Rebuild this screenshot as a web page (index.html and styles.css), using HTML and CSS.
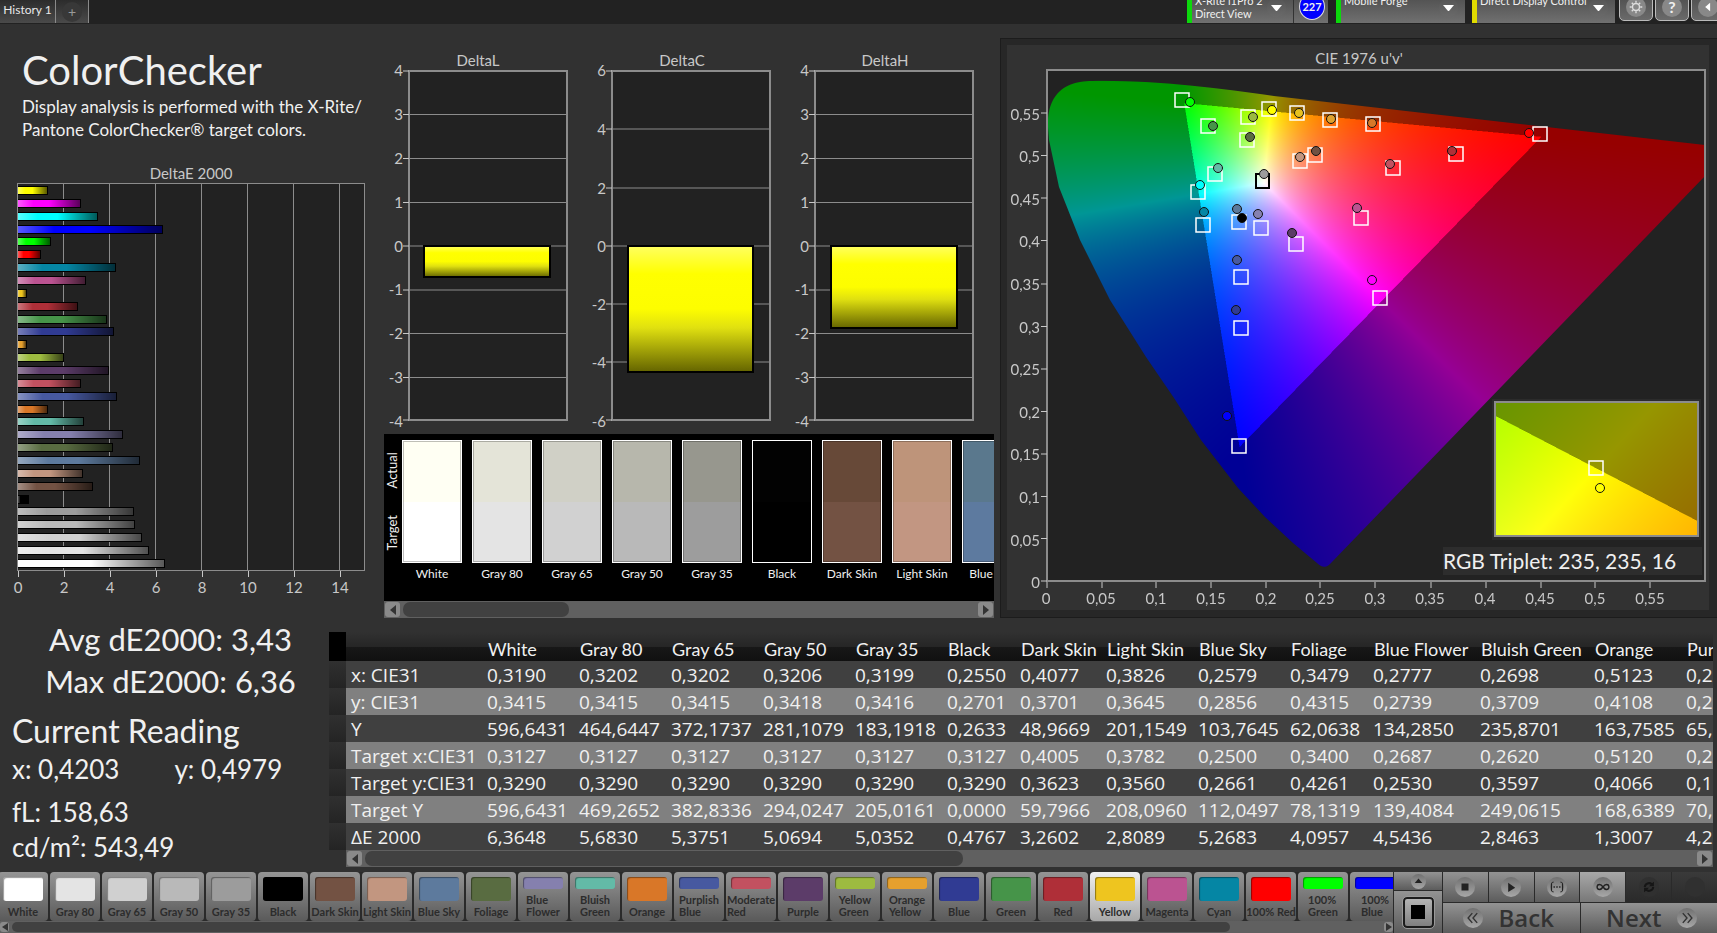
FILE: index.html
```html
<!DOCTYPE html>
<html lang="en">
<head>
  <meta charset="UTF-8">
  <meta name="viewport" content="width=device-width, initial-scale=1.0">
  <title>ColorChecker</title>
  <link rel="stylesheet" href="styles.css">
</head>
<body>

  <header class="topbar">
    <button class="tab">History 1</button>
    <button class="tab tab-add" aria-label="Add tab"><span>+</span></button>
    <div class="devices">
      <button class="device device-meter"><span>X-Rite i1Pro 2<br>Direct View</span><i class="caret"></i></button>
      <div class="device-count"><span>227</span></div>
      <button class="device device-source"><span>Mobile Forge<br>&nbsp;</span><i class="caret"></i></button>
      <button class="device device-display"><span>Direct Display Control<br>&nbsp;</span><i class="caret"></i></button>
      <button class="tool" aria-label="Settings">
        <svg class="tool-icon" viewBox="0 0 20 20"><circle cx="10" cy="10" r="5" fill="none" stroke="#ddd" stroke-width="2"/><path d="M10 1v3M10 16v3M1 10h3M16 10h3M4 4l2 2M14 14l2 2M16 4l-2 2M4 16l2-2" stroke="#ddd" stroke-width="2"/></svg>
      </button>
      <button class="tool" aria-label="Help"><span class="tool-icon">?</span></button>
      <button class="tool" aria-label="Collapse">
        <svg class="tool-icon" viewBox="0 0 20 20"><path d="M13 4v12L6 10z" fill="#fff"/></svg>
      </button>
    </div>
  </header>

  <main>
    <div class="row-top">
      <section class="intro">
        <h1>ColorChecker</h1>
        <p>Display analysis is performed with the X-Rite/<br>Pantone ColorChecker® target colors.</p>
        <h2 class="chart-title">DeltaE 2000</h2>
        <div class="de-plot">
          <i class="de-bar" style="--v:1.29;--c:#ffff00"></i>
          <i class="de-bar" style="--v:2.72;--c:#ff00ff"></i>
          <i class="de-bar" style="--v:3.46;--c:#00ffff"></i>
          <i class="de-bar" style="--v:6.29;--c:#0000ff"></i>
          <i class="de-bar" style="--v:1.42;--c:#00ff00"></i>
          <i class="de-bar" style="--v:1.00;--c:#ff0000"></i>
          <i class="de-bar" style="--v:4.25;--c:#0586a4"></i>
          <i class="de-bar" style="--v:2.94;--c:#bb5391"></i>
          <i class="de-bar" style="--v:0.37;--c:#eec51f"></i>
          <i class="de-bar" style="--v:2.60;--c:#af2f38"></i>
          <i class="de-bar" style="--v:3.86;--c:#469449"></i>
          <i class="de-bar" style="--v:4.16;--c:#303b93"></i>
          <i class="de-bar" style="--v:0.38;--c:#e5a02e"></i>
          <i class="de-bar" style="--v:1.98;--c:#9dbb40"></i>
          <i class="de-bar" style="--v:3.95;--c:#5c3c69"></i>
          <i class="de-bar" style="--v:2.73;--c:#c25160"></i>
          <i class="de-bar" style="--v:4.30;--c:#4759a0"></i>
          <i class="de-bar" style="--v:1.30;--c:#d97728"></i>
          <i class="de-bar" style="--v:2.85;--c:#63baa7"></i>
          <i class="de-bar" style="--v:4.54;--c:#8580ae"></i>
          <i class="de-bar" style="--v:4.10;--c:#596c41"></i>
          <i class="de-bar" style="--v:5.27;--c:#5d7a9d"></i>
          <i class="de-bar" style="--v:2.81;--c:#c29680"></i>
          <i class="de-bar" style="--v:3.26;--c:#735243"></i>
          <i class="de-bar" style="--v:0.48;--c:#000"></i>
          <i class="de-bar" style="--v:5.04;--c:#9c9c9c"></i>
          <i class="de-bar" style="--v:5.07;--c:#b9b9b9"></i>
          <i class="de-bar" style="--v:5.38;--c:#d0d0d0"></i>
          <i class="de-bar" style="--v:5.68;--c:#e4e4e4"></i>
          <i class="de-bar" style="--v:6.36;--c:#fff"></i>
        </div>
        <div class="de-axis">
          <span>0</span><span>2</span><span>4</span><span>6</span><span>8</span><span>10</span><span>12</span><span>14</span>
        </div>
      </section>

      <section class="center">
        <div class="deltas">
          <svg class="delta" viewBox="0 0 203 410">
            <defs>
              <linearGradient id="yellow" x1="0" y1="0" x2="0" y2="1">
                <stop offset="0" stop-color="#ffff60"/><stop offset=".22" stop-color="#ffff00"/><stop offset=".5" stop-color="#fdfd00"/><stop offset=".65" stop-color="#e0e010"/><stop offset="1" stop-color="#646400"/>
              </linearGradient>
            </defs>
            <text class="delta-name" x="94" y="42">DeltaL</text>
            <rect class="plot" x="25" y="47" width="158" height="349"/>
            <path class="grid" d="M25 90.500H183M25 134.500H183M25 178.500H183M25 222H183M25 266H183M25 309.500H183M25 353.500H183"/>
            <path class="tick" d="M19 47H25M19 90.500H25M19 134.500H25M19 178.500H25M19 222H25M19 266H25M19 309.500H25M19 353.500H25M19 396H25"/>
            <rect class="delta-bar" x="40" y="222" width="126" height="31"/>
            <g class="ylabel"><text x="19" y="52">4</text><text x="19" y="96">3</text><text x="19" y="140">2</text><text x="19" y="184">1</text><text x="19" y="228">0</text><text x="19" y="271">-1</text><text x="19" y="315">-2</text><text x="19" y="359">-3</text><text x="19" y="403">-4</text></g>
          </svg>
          <svg class="delta" viewBox="0 0 203 410">
            <text class="delta-name" x="95" y="42">DeltaC</text>
            <rect class="plot" x="25" y="47" width="158" height="349"/>
            <path class="grid" d="M25 105H183M25 164H183M25 222H183M25 280H183M25 338H183"/>
            <path class="tick" d="M19 47H25M19 105H25M19 164H25M19 222H25M19 280H25M19 338H25M19 396H25"/>
            <rect class="delta-bar" x="41" y="222" width="125" height="126"/>
            <g class="ylabel"><text x="19" y="52">6</text><text x="19" y="111">4</text><text x="19" y="170">2</text><text x="19" y="228">0</text><text x="19" y="286">-2</text><text x="19" y="344">-4</text><text x="19" y="403">-6</text></g>
          </svg>
          <svg class="delta" viewBox="0 0 203 410">
            <text class="delta-name" x="95" y="42">DeltaH</text>
            <rect class="plot" x="25" y="47" width="158" height="349"/>
            <path class="grid" d="M25 90.500H183M25 134.500H183M25 178.500H183M25 222H183M25 266H183M25 309.500H183M25 353.500H183"/>
            <path class="tick" d="M19 47H25M19 90.500H25M19 134.500H25M19 178.500H25M19 222H25M19 266H25M19 309.500H25M19 353.500H25M19 396H25"/>
            <rect class="delta-bar" x="41" y="222" width="126" height="82"/>
            <g class="ylabel"><text x="19" y="52">4</text><text x="19" y="96">3</text><text x="19" y="140">2</text><text x="19" y="184">1</text><text x="19" y="228">0</text><text x="19" y="271">-1</text><text x="19" y="315">-2</text><text x="19" y="359">-3</text><text x="19" y="403">-4</text></g>
          </svg>
        </div>

        <div class="patches">
          <div class="patch-side"><span>Actual</span><span>Target</span></div>
          <div class="patch-list">
            <div class="patch"><div class="patch-box" style="--a:#fffff3;--t:#fff"></div>White</div>
            <div class="patch"><div class="patch-box" style="--a:#e4e4d8;--t:#e4e4e4"></div>Gray 80</div>
            <div class="patch"><div class="patch-box" style="--a:#d0d0c6;--t:#d1d1d1"></div>Gray 65</div>
            <div class="patch"><div class="patch-box" style="--a:#b7b7ac;--t:#b9b9b9"></div>Gray 50</div>
            <div class="patch"><div class="patch-box" style="--a:#97978e;--t:#9d9d9d"></div>Gray 35</div>
            <div class="patch"><div class="patch-box" style="--a:#020202;--t:#000"></div>Black</div>
            <div class="patch"><div class="patch-box" style="--a:#674938;--t:#735243"></div>Dark Skin</div>
            <div class="patch"><div class="patch-box" style="--a:#be947a;--t:#c29682"></div>Light Skin</div>
            <div class="patch"><div class="patch-box" style="--a:#5a788d;--t:#5d7a9f"></div>Blue Sky</div>
          </div>
        </div>
        <div class="scroll">
          <button class="scroll-btn" aria-label="Scroll left"><i class="arrow-left"></i></button>
          <div class="scroll-track"><div class="scroll-thumb" style="width:29%"></div></div>
          <button class="scroll-btn" aria-label="Scroll right"><i class="arrow-right"></i></button>
        </div>
      </section>

      <section class="cie-frame">
        <svg class="cie" viewBox="0 0 702 565">
          <text class="cie-name" x="352" y="19">CIE 1976 u'v'</text>
          <rect x="40" y="25" width="658" height="511" fill="#222"/>
          <foreignObject x="40" y="25" width="658" height="511"><canvas id="uv" class="gamut" width="1316" height="1022"></canvas></foreignObject>
          <rect x="40" y="25" width="658" height="511" fill="none" stroke="#8c8c8c" stroke-width="2"/>
          <path class="tick" d="M34 68H40M34 110.500H40M34 153H40M34 195.500H40M34 239H40M34 281.500H40M34 324H40M34 366.500H40M34 409H40M34 451.500H40M34 493.500H40M34 536H40M40 537V543M95 537V543M149 537V543M204 537V543M259 537V543M313 537V543M368 537V543M424 537V543M479 537V543M534 537V543M588 537V543M643 537V543"/>
          <g class="ylabel cie-label"><text x="33" y="75">0,55</text><text x="33" y="117">0,5</text><text x="33" y="160">0,45</text><text x="33" y="202">0,4</text><text x="33" y="245">0,35</text><text x="33" y="288">0,3</text><text x="33" y="330">0,25</text><text x="33" y="373">0,2</text><text x="33" y="415">0,15</text><text x="33" y="458">0,1</text><text x="33" y="501">0,05</text><text x="33" y="543">0</text></g>
          <g class="xlabel cie-label"><text x="39" y="559">0</text><text x="94" y="559">0,05</text><text x="149" y="559">0,1</text><text x="204" y="559">0,15</text><text x="259" y="559">0,2</text><text x="313" y="559">0,25</text><text x="368" y="559">0,3</text><text x="423" y="559">0,35</text><text x="478" y="559">0,4</text><text x="533" y="559">0,45</text><text x="588" y="559">0,5</text><text x="643" y="559">0,55</text></g>
          <!-- target boxes -->
          <path class="target" d="M168 48h14v14h-14zM194 74h14v14h-14zM234 65h14v14h-14zM255 57h14v14h-14zM283 61h14v14h-14zM316 68h14v14h-14zM359 72h14v14h-14zM526 82h14v14h-14zM233 88h14v14h-14zM286 109h14v14h-14zM301 103h14v14h-14zM379 116h14v14h-14zM442 102h14v14h-14zM201 122h14v14h-14zM184 140h14v14h-14zM189 173h14v14h-14zM225 170h14v14h-14zM247 176h14v14h-14zM282 192h14v14h-14zM347 166h14v14h-14zM227 225h14v14h-14zM366 246h14v14h-14zM227 276h14v14h-14zM225 394h14v14h-14z"/>
          <path class="target target-white" d="M249 129h13v14h-13z"/>
          <!-- measured points -->
          <g class="reading">
            <circle cx="183" cy="57" r="4.500" fill="#00ff00"/><circle cx="206" cy="81" r="4.500" fill="#469449"/><circle cx="246" cy="72" r="4.500" fill="#9bb941"/><circle cx="265" cy="65" r="4.500" fill="#ffff00"/><circle cx="292" cy="68" r="4.500" fill="#e7c11f"/><circle cx="324" cy="74" r="4.500" fill="#e0a12e"/><circle cx="365" cy="78" r="4.500" fill="#d67828"/><circle cx="522" cy="88" r="4.500" fill="#ff0000"/>
            <circle cx="243" cy="92" r="4.500" fill="#596c41"/><circle cx="293" cy="112" r="4.500" fill="#c29680"/><circle cx="309" cy="106" r="4.500" fill="#725142"/><circle cx="383" cy="119" r="4.500" fill="#c05260"/><circle cx="445" cy="106" r="4.500" fill="#af2f38"/><circle cx="211" cy="123" r="4.500" fill="#63baa7"/><circle cx="257" cy="129" r="4.500" fill="#9c9c9c"/><circle cx="193" cy="140" r="4.500" fill="#00ffff"/>
            <circle cx="197" cy="167" r="4.500" fill="#0586a4"/><circle cx="230" cy="164" r="4.500" fill="#5c7a9c"/><circle cx="235" cy="173" r="4.500" fill="#000"/><circle cx="251" cy="169" r="4.500" fill="#8681b0"/><circle cx="285" cy="188" r="4.500" fill="#5c3c69"/><circle cx="350" cy="163" r="4.500" fill="#bb5391"/><circle cx="230" cy="215" r="4.500" fill="#4759a0"/><circle cx="365" cy="235" r="4.500" fill="#ff00ff"/><circle cx="229" cy="265" r="4.500" fill="#303b93"/><circle cx="220" cy="371" r="4.500" fill="#0000ff"/>
          </g>
          <rect x="485" y="354" width="209" height="141" fill="#2b2b2b"/>
          <foreignObject x="488" y="357" width="203" height="134"><canvas id="zoom" class="gamut" width="406" height="268"></canvas></foreignObject>
          <rect x="488" y="357" width="203" height="134" fill="none" stroke="#8c8c8c" stroke-width="2"/>
          <path class="target" d="M582 416h14v14h-14z"/>
          <circle cx="593" cy="443" r="4.500" fill="#ffff00" stroke="#111"/>
          <rect x="436" y="502" width="259" height="28" fill="#2d2d2d"/>
          <text class="triplet" x="436" y="524">RGB Triplet: 235, 235, 16</text>
        </svg>
      </section>
    </div>

    <div class="row-bottom">
      <section class="stats">
        <div class="stats-big">Avg dE2000: 3,43</div>
        <div class="stats-big">Max dE2000: 6,36</div>
        <h2>Current Reading</h2>
        <div class="stats-xy"><span>x: 0,4203</span><span>y: 0,4979</span></div>
        <div class="stats-line">fL: 158,63</div>
        <div class="stats-line">cd/m²: 543,49</div>
      </section>

      <section class="data">
        <div class="data-view">
          <table>
            <colgroup>
              <col class="c-grip"><col class="c-name"><col class="c-num"><col class="c-num"><col class="c-num"><col class="c-num"><col class="c-num"><col class="c-black"><col class="c-dark"><col class="c-num"><col class="c-num"><col class="c-foliage"><col class="c-flower"><col class="c-bluish"><col class="c-num"><col class="c-last">
            </colgroup>
            <thead>
              <tr><th class="corner"></th><th></th><th>White</th><th>Gray 80</th><th>Gray 65</th><th>Gray 50</th><th>Gray 35</th><th>Black</th><th>Dark Skin</th><th>Light Skin</th><th>Blue Sky</th><th>Foliage</th><th>Blue Flower</th><th>Bluish Green</th><th>Orange</th><th>Purplish Blue</th></tr>
            </thead>
            <tbody>
              <tr><td class="grip"></td><td>x: CIE31</td><td>0,3190</td><td>0,3202</td><td>0,3202</td><td>0,3206</td><td>0,3199</td><td>0,2550</td><td>0,4077</td><td>0,3826</td><td>0,2579</td><td>0,3479</td><td>0,2777</td><td>0,2698</td><td>0,5123</td><td>0,2222</td></tr>
              <tr><td class="grip"></td><td>y: CIE31</td><td>0,3415</td><td>0,3415</td><td>0,3415</td><td>0,3418</td><td>0,3416</td><td>0,2701</td><td>0,3701</td><td>0,3645</td><td>0,2856</td><td>0,4315</td><td>0,2739</td><td>0,3709</td><td>0,4108</td><td>0,2110</td></tr>
              <tr><td class="grip"></td><td>Y</td><td>596,6431</td><td>464,6447</td><td>372,1737</td><td>281,1079</td><td>183,1918</td><td>0,2633</td><td>48,9669</td><td>201,1549</td><td>103,7645</td><td>62,0638</td><td>134,2850</td><td>235,8701</td><td>163,7585</td><td>65,6000</td></tr>
              <tr><td class="grip"></td><td>Target x:CIE31</td><td>0,3127</td><td>0,3127</td><td>0,3127</td><td>0,3127</td><td>0,3127</td><td>0,3127</td><td>0,4005</td><td>0,3782</td><td>0,2500</td><td>0,3400</td><td>0,2687</td><td>0,2620</td><td>0,5120</td><td>0,2110</td></tr>
              <tr><td class="grip"></td><td>Target y:CIE31</td><td>0,3290</td><td>0,3290</td><td>0,3290</td><td>0,3290</td><td>0,3290</td><td>0,3290</td><td>0,3623</td><td>0,3560</td><td>0,2661</td><td>0,4261</td><td>0,2530</td><td>0,3597</td><td>0,4066</td><td>0,1900</td></tr>
              <tr><td class="grip"></td><td>Target Y</td><td>596,6431</td><td>469,2652</td><td>382,8336</td><td>294,0247</td><td>205,0161</td><td>0,0000</td><td>59,7966</td><td>208,0960</td><td>112,0497</td><td>78,1319</td><td>139,4084</td><td>249,0615</td><td>168,6389</td><td>70,2000</td></tr>
              <tr><td class="grip"></td><td>ΔE 2000</td><td>6,3648</td><td>5,6830</td><td>5,3751</td><td>5,0694</td><td>5,0352</td><td>0,4767</td><td>3,2602</td><td>2,8089</td><td>5,2683</td><td>4,0957</td><td>4,5436</td><td>2,8463</td><td>1,3007</td><td>4,2800</td></tr>
            </tbody>
          </table>
        </div>
        <div class="scroll scroll-data">
          <button class="scroll-btn" aria-label="Scroll left"><i class="arrow-left"></i></button>
          <div class="scroll-track"><div class="scroll-thumb" style="width:45%"></div></div>
          <button class="scroll-btn" aria-label="Scroll right"><i class="arrow-right"></i></button>
        </div>
      </section>
    </div>
  </main>

  <footer class="bottombar">
    <div class="swatch-pane">
      <div class="swatches">
        <button class="swatch"><i style="--c:#fff"></i><span>White</span></button>
        <button class="swatch"><i style="--c:#e4e4e4"></i><span>Gray 80</span></button>
        <button class="swatch"><i style="--c:#d0d0d0"></i><span>Gray 65</span></button>
        <button class="swatch"><i style="--c:#b9b9b9"></i><span>Gray 50</span></button>
        <button class="swatch"><i style="--c:#9c9c9c"></i><span>Gray 35</span></button>
        <button class="swatch"><i style="--c:#000"></i><span>Black</span></button>
        <button class="swatch"><i style="--c:#735243"></i><span>Dark Skin</span></button>
        <button class="swatch"><i style="--c:#c29680"></i><span>Light Skin</span></button>
        <button class="swatch"><i style="--c:#5d7a9d"></i><span>Blue Sky</span></button>
        <button class="swatch"><i style="--c:#596c41"></i><span>Foliage</span></button>
        <button class="swatch"><i style="--c:#8580ae"></i><span>Blue<br>Flower</span></button>
        <button class="swatch"><i style="--c:#63baa7"></i><span>Bluish<br>Green</span></button>
        <button class="swatch"><i style="--c:#d97728"></i><span>Orange</span></button>
        <button class="swatch"><i style="--c:#4759a0"></i><span>Purplish<br>Blue</span></button>
        <button class="swatch"><i style="--c:#c25160"></i><span>Moderate<br>Red</span></button>
        <button class="swatch"><i style="--c:#5c3c69"></i><span>Purple</span></button>
        <button class="swatch"><i style="--c:#9dbb40"></i><span>Yellow<br>Green</span></button>
        <button class="swatch"><i style="--c:#e5a02e"></i><span>Orange<br>Yellow</span></button>
        <button class="swatch"><i style="--c:#303b93"></i><span>Blue</span></button>
        <button class="swatch"><i style="--c:#469449"></i><span>Green</span></button>
        <button class="swatch"><i style="--c:#af2f38"></i><span>Red</span></button>
        <button class="swatch active"><i style="--c:#eec51f"></i><span>Yellow</span></button>
        <button class="swatch"><i style="--c:#bb5391"></i><span>Magenta</span></button>
        <button class="swatch"><i style="--c:#0586a4"></i><span>Cyan</span></button>
        <button class="swatch"><i style="--c:#ff0000"></i><span>100% Red</span></button>
        <button class="swatch"><i style="--c:#00ff00"></i><span>100%<br>Green</span></button>
        <button class="swatch"><i style="--c:#0000ff"></i><span>100%<br>Blue</span></button>
      </div>
      <div class="scroll scroll-small">
        <button class="scroll-btn" aria-label="Scroll left"><i class="arrow-left"></i></button>
        <div class="scroll-track"><div class="scroll-thumb" style="width:89%"></div></div>
        <button class="scroll-btn" aria-label="Scroll right"><i class="arrow-right"></i></button>
      </div>
    </div>

    <div class="window-pick">
      <button class="ctl pick-up" aria-label="Expand"><svg class="knob" viewBox="0 0 20 20"><path d="M5 12h10l-5-6z" fill="#222"/></svg></button>
      <button class="ctl pick-window" aria-label="Pattern window"><i></i></button>
    </div>

    <div class="transport">
      <div class="transport-row">
        <button class="ctl" aria-label="Stop"><svg class="knob" viewBox="0 0 20 20"><path d="M5 5h10v10H5z" fill="#222"/></svg></button>
        <button class="ctl" aria-label="Play"><svg class="knob" viewBox="0 0 20 20"><path d="M6 4v13l10-6z" fill="#222"/></svg></button>
        <button class="ctl" aria-label="Read series"><svg class="knob" viewBox="0 0 20 20"><path d="M5 3H2v14h3M15 3h3v14h-3M5 10h2M9 10h2M13 10h2" fill="none" stroke="#222" stroke-width="2"/></svg></button>
        <button class="ctl lit" aria-label="Continuous"><svg class="knob" viewBox="0 0 20 20"><path d="M10 10C8 7 6.500 6.500 5 6.500a3.500 3.500 0 0 0 0 7C6.500 13.500 8 13 10 10s3.500-3.500 5-3.500a3.500 3.500 0 0 1 0 7C13.500 13.500 12 13 10 10z" fill="none" stroke="#222" stroke-width="2"/></svg></button>
        <button class="ctl off" aria-label="Refresh"><svg class="knob" viewBox="0 0 20 20"><path d="M4 10a6 6 0 0 1 10-4M16 10a6 6 0 0 1-10 4" fill="none" stroke="#161616" stroke-width="3"/><path d="M17 2v7h-7zM3 18v-7h7z" fill="#161616"/></svg></button>
        <button class="ctl off" aria-label="None"><svg class="knob" viewBox="0 0 20 20"></svg></button>
      </div>
      <div class="transport-row">
        <button class="ctl nav nav-back"><svg class="knob" viewBox="0 0 20 20"><path d="M9 3l-6 7 6 7M16 3l-6 7 6 7" fill="none" stroke="#333" stroke-width="2"/></svg>Back</button>
        <button class="ctl nav nav-next">Next<svg class="knob" viewBox="0 0 20 20"><path d="M4 3l6 7-6 7M11 3l6 7-6 7" fill="none" stroke="#333" stroke-width="2"/></svg></button>
      </div>
    </div>
  </footer>

  <script src="gamut.js"></script>
</body>
</html>
```

FILE: styles.css
```css
* {
  box-sizing: border-box;
}
body {
  margin: 0;
  min-height: 100vh;
  display: flex;
  flex-direction: column;
  overflow: hidden;
  background: #313131;
  color: #f0f0f0;
  font-family: Lato, "Open Sans", sans-serif;
}
button {
  margin: 0;
  padding: 0;
  border: none;
  font-family: inherit;
  color: inherit;
}
h1, h2, p {
  margin: 0;
  font-weight: 400;
}

/* Top bar */
.topbar {
  display: flex;
  height: 24px;
  overflow: hidden;
  background: #222;
}
.tab {
  width: 56px;
  height: 23px;
  padding-bottom: 5px;
  border-right: 1px solid #8a8a8a;
  background: linear-gradient(#2c2c2c, #4a4a4a);
  font-size: 12px;
  color: #e8e8e8;
  white-space: nowrap;
}
.tab-add {
  width: 33px;
  padding: 0;
}
.tab-add span {
  display: block;
  width: 20px;
  margin: 0 auto;
  border-radius: 50%;
  background: #383838;
  font-size: 14px;
  line-height: 20px;
  color: #999;
}
.devices {
  display: flex;
  align-items: flex-end;
  height: 23px;
  margin-left: auto;
  margin-right: -9px;
}
.device {
  display: flex;
  align-items: center;
  justify-content: space-between;
  height: 36px;
  padding: 4px 7px 0 3px;
  border-left: 5px solid #0cd80c;
  background: linear-gradient(#444, #707070);
  font-size: 11px;
  line-height: 13px;
  text-align: left;
  white-space: nowrap;
}
.device-meter {
  width: 106px;
}
.device-source {
  width: 129px;
  margin: 0 7px 0 8px;
}
.device-display {
  width: 143px;
  margin-right: 3px;
  border-left-color: #e0dc00;
}
.caret {
  width: 19px;
  height: 19px;
  border-radius: 50%;
  background: linear-gradient(#555, #6a6a6a);
}
.caret::after {
  content: "";
  display: block;
  margin: 7px 4px;
  border: 5px solid transparent;
  border-top: 6px solid #fff;
}
.device-count {
  width: 35px;
  height: 36px;
  padding: 6px 2px 0 5px;
  border-left: 1px solid #333;
  background: linear-gradient(#444, #707070);
}
.device-count span {
  display: block;
  width: 26px;
  border: 1px solid #ddd;
  border-radius: 50%;
  background: #0000ff;
  font-size: 11px;
  font-weight: 700;
  line-height: 25px;
  text-align: center;
}
.tool {
  width: 34px;
  height: 36px;
  margin: 0 1px 2px;
  padding-top: 8px;
  border: 1px solid #bbb;
  border-radius: 5px;
  background: linear-gradient(#444, #6a6a6a);
}
.tool-icon {
  display: block;
  width: 20px;
  height: 20px;
  margin: 0 auto;
  padding: 3px;
  border-radius: 50%;
  background: #888;
}
span.tool-icon {
  padding: 0;
  font-size: 16px;
  font-weight: 700;
  line-height: 20px;
}

/* Upper row */
.row-top {
  display: flex;
  height: 594px;
}
.intro {
  flex: none;
  width: 384px;
  padding-top: 22px;
}
.intro h1 {
  margin-left: 22px;
  font-size: 40px;
  line-height: 48px;
}
.intro p {
  margin: 1px 0 22px 22px;
  font-size: 17px;
  line-height: 23px;
  white-space: nowrap;
}
.chart-title {
  width: 382px;
  font-size: 15px;
  line-height: 20px;
  text-align: center;
  color: #c8c8c8;
}
.de-plot {
  display: flex;
  flex-direction: column;
  justify-content: space-between;
  width: 346px;
  height: 386px;
  margin: 1px 0 0 18px;
  padding: 2px 0;
  outline: 1px solid #8c8c8c;
  background: repeating-linear-gradient(90deg, #222 0 45px, #8c8c8c 45px 46px);
}
.de-bar {
  width: calc(var(--v) / 15 * 100%);
  height: 9px;
  border: 1px solid #000;
  border-left: none;
  background: linear-gradient(90deg, rgba(255,255,255,0.35), rgba(255,255,255,0) 25%, rgba(0,0,0,0) 50%, rgba(0,0,0,0.65)), var(--c);
}
.de-axis {
  display: flex;
  margin-left: -5px;
}
.de-axis span {
  width: 46px;
  font-size: 15px;
  line-height: 20px;
  text-align: center;
  color: #c8c8c8;
}
.de-axis span::before {
  content: "";
  display: block;
  width: 1px;
  height: 7px;
  margin: 0 auto;
  background: #c8c8c8;
}

.center {
  flex: none;
  width: 610px;
}
.deltas {
  display: flex;
}
.delta {
  flex: none;
  width: 203px;
  height: 410px;
}
.plot {
  fill: #222;
  stroke: #8c8c8c;
  stroke-width: 2px;
}
.grid {
  stroke: #8c8c8c;
}
.tick {
  stroke: #c8c8c8;
  stroke-width: 1px;
}
.delta-bar {
  fill: url(#yellow);
  stroke: #000;
  stroke-width: 2px;
}
.delta-name,
.cie-name {
  fill: #c8c8c8;
  font-size: 15px;
  text-anchor: middle;
}
.ylabel {
  fill: #c8c8c8;
  font-size: 15px;
  text-anchor: end;
}
.xlabel {
  fill: #c8c8c8;
  font-size: 15px;
  text-anchor: middle;
}

.patches {
  display: flex;
  height: 167px;
  padding-top: 6px;
  background: #000;
  overflow: hidden;
}
.patch-side {
  display: flex;
  flex-direction: column;
  flex: none;
  width: 18px;
  height: 123px;
}
.patch-side span {
  flex: 1;
  width: 17px;
  writing-mode: vertical-rl;
  transform: rotate(180deg);
  font-size: 13px;
  line-height: 17px;
  text-align: center;
}
.patch-list {
  display: flex;
  gap: 10px;
}
.patch {
  flex: none;
  width: 60px;
  font-size: 12px;
  line-height: 22px;
  text-align: center;
  white-space: nowrap;
}
.patch-box {
  height: 123px;
  border: 1px solid #fff;
  background: linear-gradient(var(--a) 50%, var(--t) 50%);
  box-shadow: inset 0 0 0 1px rgba(0,0,0,0.25);
}

/* Scroll bars */
.scroll {
  display: flex;
  height: 17px;
  padding: 1px;
  background: #606060;
}
.scroll-btn {
  display: flex;
  flex: none;
  align-items: center;
  justify-content: center;
  width: 15px;
  border-radius: 3px;
  background: #8a8a8a;
}
.arrow-left,
.arrow-right {
  border: 5px solid transparent;
}
.arrow-left {
  border-right: 6px solid #333;
  border-left: none;
}
.arrow-right {
  border-left: 6px solid #333;
  border-right: none;
}
.scroll-track {
  flex: 1;
  padding: 0 3px;
}
.scroll-thumb {
  height: 100%;
  border-radius: 7px;
  background: #414141;
}
.scroll-small {
  height: 12px;
  padding: 1px 0;
}
.scroll-small .scroll-btn {
  width: 9px;
}
.scroll-small .arrow-left,
.scroll-small .arrow-right {
  border-top-width: 4px;
  border-bottom-width: 4px;
}

/* CIE chart */
.cie-frame {
  flex: 1;
  height: 580px;
  margin: 14px 0 0 6px;
  padding: 6px 8px 8px 6px;
  border: 1px solid #1c1c1c;
  border-width: 1px 0 1px 1px;
  background: #272727;
}
.cie {
  display: block;
  width: 100%;
  background: #323232;
}
.gamut {
  display: block;
  width: 100%;
  height: 100%;
}
.target {
  fill: none;
  stroke: #fff;
  stroke-width: 1.5px;
}
.target-white {
  stroke: #000;
  stroke-width: 2px;
}
.reading {
  stroke: #111;
  stroke-width: 1px;
}
.triplet {
  fill: #f0f0f0;
  font-size: 21px;
}

/* Lower row */
.row-bottom {
  display: flex;
}
.stats {
  flex: none;
  width: 329px;
  padding-left: 12px;
  white-space: nowrap;
}
.stats-big {
  font-size: 31px;
  line-height: 42px;
  text-align: center;
}
.stats h2 {
  margin-top: 8px;
  font-size: 32px;
  line-height: 42px;
}
.stats-xy {
  display: flex;
  gap: 55px;
  font-size: 26px;
  line-height: 35px;
}
.stats-line {
  font-size: 26px;
  line-height: 35px;
}
.stats-xy + .stats-line {
  margin-top: 8px;
}

.data {
  flex: 1;
  min-width: 0;
  padding: 14px 4px 0 0;
}
.data-view {
  overflow: hidden;
}
table {
  width: 1486px;
  table-layout: fixed;
  border-collapse: collapse;
}
.c-grip { width: 17px; }
.c-name { width: 136px; }
.c-num { width: 92px; }
.c-black { width: 73px; }
.c-dark { width: 86px; }
.c-foliage { width: 83px; }
.c-flower { width: 107px; }
.c-bluish { width: 114px; }
.c-last { width: 134px; }
th {
  height: 29px;
  padding: 4px 0 0 6px;
  background: linear-gradient(#313131, #262626 50%, #181818 50%, #101010);
  font-size: 18px;
  font-weight: 400;
  line-height: 22px;
  text-align: left;
  white-space: nowrap;
}
th.corner {
  background: #000;
}
td {
  height: 27px;
  padding: 0 0 0 5px;
  background: #404040;
  font-family: "Open Sans", "Noto Sans", sans-serif;
  font-size: 19px;
  line-height: 26px;
  white-space: nowrap;
}
tbody tr:nth-child(even) td {
  background: #808080;
}
tbody tr td.grip {
  background: linear-gradient(#303030, #242424);
}
.scroll-data {
  margin-left: 17px;
}

/* Bottom bar */
.bottombar {
  display: flex;
  height: 61px;
  margin-top: auto;
  background: #2a2a2a;
}
.swatch-pane {
  flex: 1;
  min-width: 0;
  overflow: hidden;
}
.swatches {
  display: flex;
  gap: 2px;
  height: 49px;
  margin-left: -2px;
}
.swatch {
  display: flex;
  flex: none;
  flex-direction: column;
  align-items: center;
  width: 50px;
  height: 49px;
  padding: 5px 0 3px;
  border-radius: 4px;
  background: linear-gradient(#959595, #5a5a5a);
  font-size: 11px;
  line-height: 12px;
  font-weight: 700;
  color: #2c2c2c;
  text-align: left;
  white-space: nowrap;
}
.swatch i {
  flex: 1;
  width: 40px;
  margin-bottom: 5px;
  border-radius: 3px;
  background: var(--c);
  box-shadow: inset 1px 1px 1px rgba(0,0,0,0.4);
}
.swatch.active {
  background: linear-gradient(#f0f0f0, #a8a8a8);
}
.ctl {
  display: flex;
  align-items: center;
  justify-content: center;
  background: linear-gradient(#939393, #5c5c5c);
}
.knob {
  width: 20px;
  height: 20px;
  padding: 3px;
  border-radius: 50%;
  background: linear-gradient(#707070, #a8a8a8);
}
.window-pick {
  display: flex;
  flex-direction: column;
  gap: 1px;
  width: 48px;
  margin: 0 1px;
}
.pick-up {
  height: 18px;
}
.pick-up .knob {
  width: 15px;
  height: 15px;
  padding: 0;
}
.pick-window {
  flex: 1;
}
.pick-window i {
  width: 31px;
  height: 31px;
  border: 2px solid #1c1c1c;
  border-radius: 4px;
  outline: 1px solid #999;
  background: linear-gradient(#000, #000) center / 14px 14px no-repeat, linear-gradient(#b4b4b4, #808080);
}
.transport {
  display: flex;
  flex-direction: column;
  gap: 1px;
  width: 274px;
}
.transport-row {
  display: flex;
  flex: 1;
  gap: 1px;
}
.transport-row .ctl {
  flex: 1;
}
.ctl.lit {
  background: linear-gradient(#a8a8a8, #787878);
}
.ctl.off {
  background: linear-gradient(#3a3a3a, #2a2a2a);
}
.ctl.off .knob {
  background: #303030;
}
.nav {
  gap: 16px;
  font-family: "Open Sans", "Noto Sans", sans-serif;
  font-size: 24px;
  font-weight: 600;
  line-height: 28px;
  color: #333;
}
.nav-back {
  padding-right: 6px;
}
.nav-next {
  padding-left: 6px;
}
```

FILE: gamut.js
```js
// Rec.709 chromaticity shading. Colors outside the triangle are dimmed.
function shade(x, y) {
  const X = x / y, Z = (1 - x - y) / y;
  const rgb = [
    3.2406 * X - 1.5372 - 0.4986 * Z,
    -0.9689 * X + 1.8758 + 0.0415 * Z,
    0.0557 * X - 0.2040 + 1.0570 * Z
  ];
  const inside = Math.min(...rgb) >= 0;
  const max = Math.max(...rgb);
  const level = inside ? 255 : 150;
  return rgb.map(c => level * Math.max(c, 0) / max);
}

function paint(canvas, toXY) {
  const ctx = canvas.getContext('2d');
  const img = ctx.createImageData(canvas.width, canvas.height);
  let i = 0;
  for (let py = 0; py < canvas.height; py++) {
    for (let px = 0; px < canvas.width; px++) {
      const [x, y] = toXY(px / 2, py / 2);
      const [r, g, b] = shade(x, y);
      img.data[i++] = r;
      img.data[i++] = g;
      img.data[i++] = b;
      img.data[i++] = 255;
    }
  }
  ctx.putImageData(img, 0, 0);
  return ctx;
}

// u'v' chart, cut to the spectral locus
const ctx = paint(document.getElementById('uv'), (px, py) => {
  const u = px / 1096, v = Math.max((511 - py) / 850, 0.002);
  const d = 6 * u - 16 * v + 12;
  return [9 * u / d, 4 * v / d];
});
const blueSide = [
  [246, 473], [218, 447], [191, 418], [154, 370], [127, 328], [99, 287], [63, 230], [33, 170], [12, 117], [2, 70]
];
ctx.globalCompositeOperation = 'destination-in';
ctx.scale(2, 2);
ctx.beginPath();
ctx.moveTo(1, 57);
ctx.bezierCurveTo(0, 30, 12, 11, 45, 11);
ctx.bezierCurveTo(110, 10, 170, 18, 227, 26);
ctx.lineTo(658, 75);
ctx.lineTo(658, 106);
ctx.lineTo(283, 494);
ctx.quadraticCurveTo(277, 500, 270, 493);
for (const [x, y] of blueSide) ctx.lineTo(x, y);
ctx.fill();

// close-up of the selected target in xy
paint(document.getElementById('zoom'), (px, py) => [
  0.4193 + (px - 101) / 4060,
  0.5053 - (py - 66) / 2660
]);
```
